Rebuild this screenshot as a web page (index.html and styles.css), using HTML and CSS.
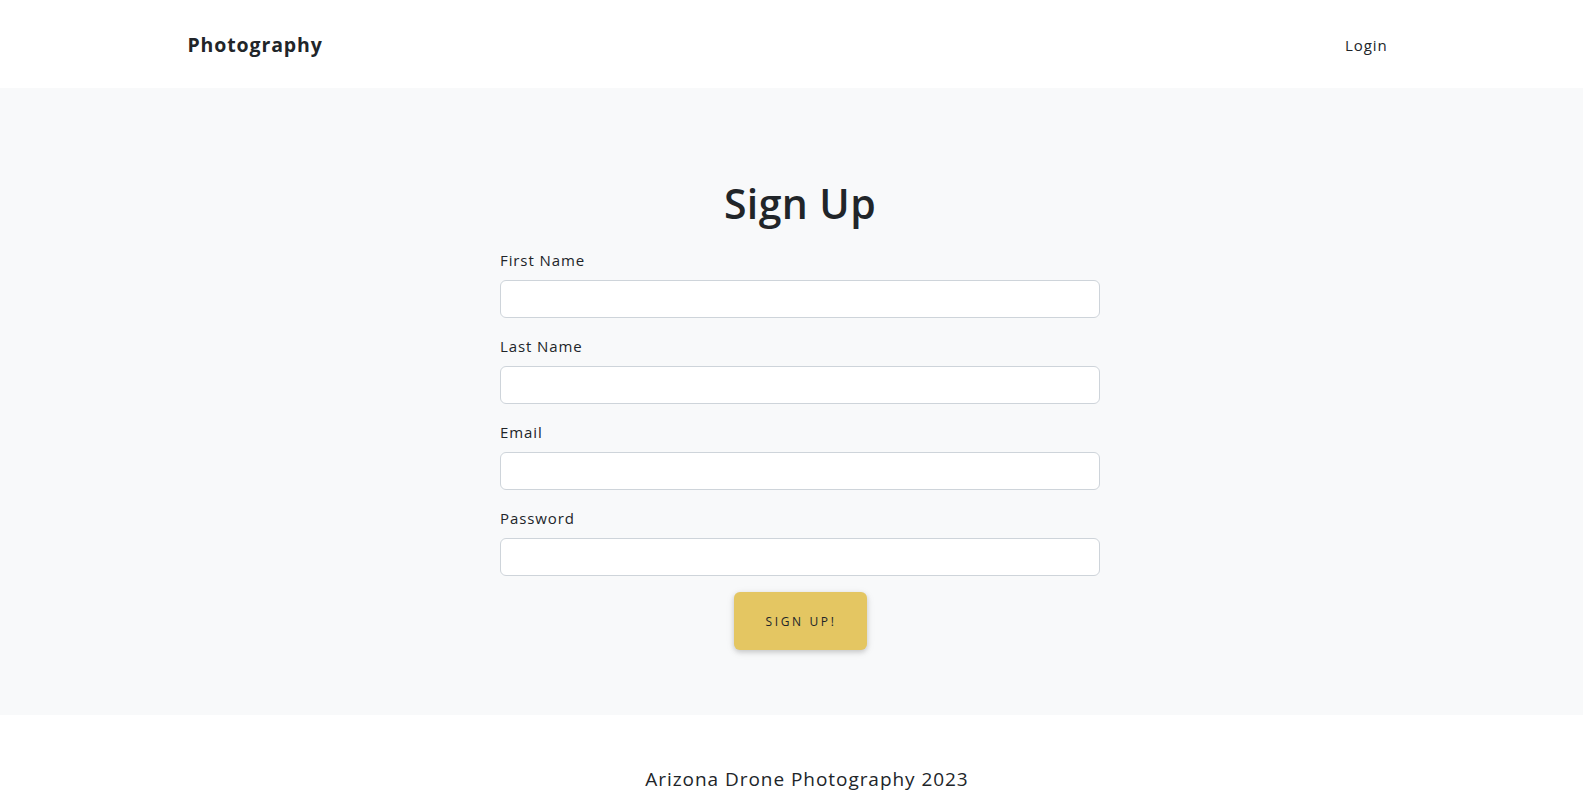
FILE: index.html
```html
<!DOCTYPE html>
<html lang="en">
<head>
<meta charset="utf-8">
<title>Sign Up</title>
<link rel="stylesheet" href="styles.css">
</head>
<body>
<header class="navbar">
  <div class="nav-inner">
    <a class="brand" href="#">Photography</a>
    <a class="nav-link" href="#">Login</a>
  </div>
</header>
<main class="signup-section">
  <div class="form-wrap">
    <h1 class="title">Sign Up</h1>
    <form class="signup-form">
      <div class="field">
        <label class="field-label" for="first">First Name</label>
        <input class="field-input" id="first" type="text">
      </div>
      <div class="field">
        <label class="field-label" for="last">Last Name</label>
        <input class="field-input" id="last" type="text">
      </div>
      <div class="field">
        <label class="field-label" for="email">Email</label>
        <input class="field-input" id="email" type="email">
      </div>
      <div class="field">
        <label class="field-label" for="password">Password</label>
        <input class="field-input" id="password" type="password">
      </div>
      <div class="actions">
        <button class="submit-btn" type="button">Sign Up!</button>
      </div>
    </form>
  </div>
</main>
<footer class="footer">
  <p class="footer-text">Arizona Drone Photography 2023</p>
</footer>
</body>
</html>
```
FILE: styles.css
```css
* { box-sizing: border-box; }
html, body { margin: 0; padding: 0; }
body {
  font-family: "Open Sans", "Noto Sans", "Liberation Sans", sans-serif;
  color: #212529;
  background: #fff;
  font-size: 16px;
  line-height: 1.5;
  letter-spacing: 0.03em;
}
a { text-decoration: none; color: inherit; }

.navbar {
  height: 88px;
  display: flex;
  justify-content: center;
  background: #fff;
}
.nav-inner {
  width: 1208px;
  display: flex;
  align-items: center;
  justify-content: space-between;
  padding-top: 2px;
}
.brand {
  font-weight: 700;
  font-size: 19.5px;
  color: #212529;
  letter-spacing: 0.045em;
}
.nav-link {
  font-size: 15px;
  padding: 8px;
  color: #212529;
  letter-spacing: 0.06em;
}

.signup-section {
  background: #f8f9fa;
  height: 627px;
  padding-top: 91px;
  display: flex;
  justify-content: center;
}
.form-wrap {
  width: 617px;
  padding-left: 17px;
}
.title {
  margin: 0 0 20px;
  text-align: center;
  font-size: 41px;
  font-weight: 600;
  line-height: 1.2;
  letter-spacing: 0.01em;
}
.signup-form {
  display: flex;
  flex-direction: column;
}
.field {
  display: flex;
  flex-direction: column;
  margin-bottom: 16px;
}
.field-label {
  font-size: 15px;
  line-height: 24px;
  margin-bottom: 8px;
  letter-spacing: 0.06em;
}
.field-input {
  height: 38px;
  border: 1px solid #ced4da;
  border-radius: 6px;
  background: #fff;
  font: inherit;
  padding: 6px 12px;
}
.actions {
  display: flex;
  justify-content: center;
}
.submit-btn {
  width: 133px;
  height: 58px;
  border: none;
  border-radius: 6px;
  background: #e4c662;
  color: #212529;
  font-family: inherit;
  font-size: 12px;
  letter-spacing: 0.22em;
  text-transform: uppercase;
  box-shadow: 0 2px 5px rgba(0,0,0,0.16), 0 2px 10px rgba(0,0,0,0.08);
  padding: 0 0 0 2px;
}

.footer {
  height: 94px;
  display: flex;
  justify-content: center;
  align-items: center;
  padding-left: 31px;
}
.footer-text {
  margin: 0;
  font-size: 19px;
  letter-spacing: 0.05em;
  padding-top: 34px;
}
```
